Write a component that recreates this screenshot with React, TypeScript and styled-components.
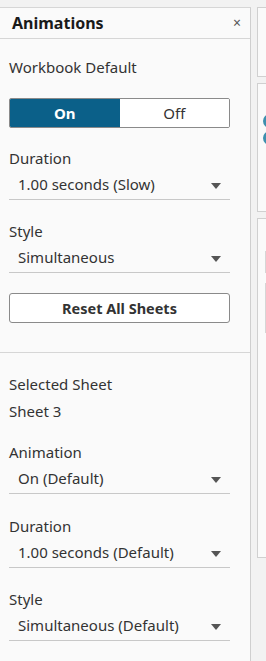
import styled, { createGlobalStyle } from "styled-components";

const GlobalStyle = createGlobalStyle`
  body {
    margin: 0;
    background: #f2f2f2;
    font-family: "Noto Sans", "Open Sans", sans-serif;
    color: #333;
  }
`;

const Page = styled.div`
  display: flex;
  align-items: flex-start;
  gap: 6px;
  padding-top: 7px;
  height: 654px;
  overflow: hidden;
`;

const Panel = styled.aside`
  width: 250px;
  flex-shrink: 0;
  height: 660px;
  background: #fafafa;
  border-top: 1px solid #d6d6d6;
  border-right: 1px solid #cfcfcf;
`;

const Header = styled.div`
  height: 30px;
  display: flex;
  align-items: center;
  justify-content: space-between;
  padding: 0 9px 0 12px;
  border-bottom: 1px solid #d6d6d6;
`;

const Title = styled.h1`
  margin: 0;
  font-size: 16px;
  font-weight: 700;
  color: #1a1a1a;
`;

const Close = styled.span`
  font-size: 14px;
  color: #555;
  line-height: 1;
`;

const Body = styled.div`
  padding: 0 20px 0 9px;
`;

const Section = styled.div<{ top: number }>`
  padding-top: ${(p) => p.top}px;
`;

const Label = styled.div<{ gap?: number }>`
  font-size: 15px;
  line-height: 18px;
  color: #333;
  margin-bottom: ${(p) => p.gap ?? 0}px;
`;

const Toggle = styled.div`
  display: flex;
  height: 28px;
  border: 1px solid #8a8a8a;
  border-radius: 2px;
  overflow: hidden;
`;

const ToggleOption = styled.div<{ active?: boolean }>`
  flex: 1;
  display: flex;
  align-items: center;
  justify-content: center;
  font-size: 15px;
  font-weight: ${(p) => (p.active ? 700 : 400)};
  background: ${(p) => (p.active ? "#0b6089" : "#fff")};
  color: ${(p) => (p.active ? "#fff" : "#333")};
`;

const Field = styled.div<{ top: number }>`
  padding-top: ${(p) => p.top}px;
`;

const Select = styled.div`
  display: flex;
  align-items: center;
  justify-content: space-between;
  height: 31px;
  padding: 1px 9px 0 9px;
  font-size: 15px;
  color: #333;
  border-bottom: 1px solid #c8c8c8;
`;

const Caret = styled.span`
  width: 0;
  height: 0;
  margin-top: 4px;
  border-left: 5px solid transparent;
  border-right: 5px solid transparent;
  border-top: 6px solid #555;
`;

const ResetButton = styled.button`
  display: block;
  width: 100%;
  height: 30px;
  margin-top: 20px;
  background: #fff;
  border: 1px solid #8a8a8a;
  border-radius: 3px;
  font-family: inherit;
  font-size: 14.5px;
  font-weight: 700;
  color: #333;
`;

const Divider = styled.hr`
  margin: 29px 0 0;
  border: none;
  border-top: 1px solid #d6d6d6;
  width: 250px;
`;

const SideColumn = styled.div`
  display: flex;
  flex-direction: column;
  gap: 6px;
`;

const SideCard = styled.div<{ h: number }>`
  width: 40px;
  height: ${(p) => p.h}px;
  background: #fafafa;
  border: 1px solid #d0d0d0;
  border-right: none;
`;

const Dots = styled.div`
  display: flex;
  flex-direction: column;
  gap: 3px;
  padding: 30px 0 0 5px;
`;

const Dot = styled.span`
  width: 14px;
  height: 14px;
  border-radius: 50%;
  background: #3e8fae;
`;

const Bars = styled.div`
  display: flex;
  flex-direction: column;
  gap: 10px;
  padding: 32px 0 0 7px;
`;

const Bar = styled.span<{ h: number }>`
  width: 2px;
  height: ${(p) => p.h}px;
  background: #d6d6d6;
`;

function Dropdown({ label, value, top }: { label: string; value: string; top: number }) {
  return (
    <Field top={top}>
      <Label>{label}</Label>
      <Select>
        {value}
        <Caret />
      </Select>
    </Field>
  );
}

export default function App() {
  return (
    <>
      <GlobalStyle />
      <Page>
        <Panel>
          <Header>
            <Title>Animations</Title>
            <Close>×</Close>
          </Header>
          <Body>
            <Section top={19}>
              <Label gap={22}>Workbook Default</Label>
              <Toggle>
                <ToggleOption active>On</ToggleOption>
                <ToggleOption>Off</ToggleOption>
              </Toggle>
            </Section>
            <Dropdown top={21} label="Duration" value="1.00 seconds (Slow)" />
            <Dropdown top={22} label="Style" value="Simultaneous" />
            <ResetButton>Reset All Sheets</ResetButton>
          </Body>
          <Divider />
          <Body>
            <Section top={22}>
              <Label gap={9}>Selected Sheet</Label>
              <Label>Sheet 3</Label>
            </Section>
            <Dropdown top={23} label="Animation" value="On (Default)" />
            <Dropdown top={23} label="Duration" value="1.00 seconds (Default)" />
            <Dropdown top={22} label="Style" value="Simultaneous (Default)" />
          </Body>
        </Panel>
        <SideColumn>
          <SideCard h={68} />
          <SideCard h={127}>
            <Dots>
              <Dot />
              <Dot />
            </Dots>
          </SideCard>
          <SideCard h={338}>
            <Bars>
              <Bar h={22} />
              <Bar h={50} />
            </Bars>
          </SideCard>
        </SideColumn>
      </Page>
    </>
  );
}
